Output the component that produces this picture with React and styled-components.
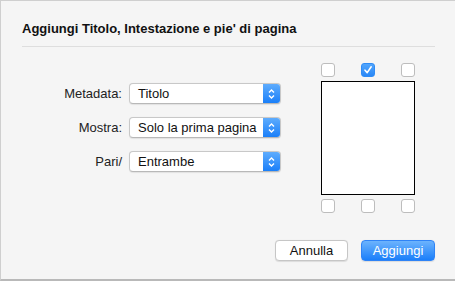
import React from "react";
import styled, { createGlobalStyle } from "styled-components";

const Global = createGlobalStyle`
  html, body { margin: 0; padding: 0; background: #f5f5f5; }
  * { box-sizing: border-box; }
`;

const Window = styled.div`
  width: 455px;
  height: 281px;
  background: #f5f5f5;
  border-top: 1px solid #cfcfcf;
  border-left: 1px solid #cfcfcf;
  border-bottom: 2px solid #b9b9b9;
  font-family: "Liberation Sans", Arial, sans-serif;
  color: #1e1e1e;
  display: flex;
  flex-direction: column;
  padding: 20px 19px 0 21px;
`;

const Title = styled.h1`
  margin: 0;
  font-size: 13px;
  font-weight: bold;
  line-height: 16px;
  color: #111;
`;

const Separator = styled.div`
  height: 1px;
  background: #dedede;
  margin-top: 9px;
  width: 413px;
`;

const Body = styled.div`
  display: flex;
  margin-top: 16px;
`;

const Form = styled.div`
  display: grid;
  grid-template-columns: 100px 152px;
  column-gap: 7px;
  row-gap: 13px;
  align-content: start;
  margin-top: 20px;
`;

const Label = styled.label`
  font-size: 13px;
  text-align: right;
  align-self: center;
  color: #222;
`;

const Popup = styled.div`
  height: 21px;
  display: flex;
  background: #fff;
  border: 1px solid #c8c8c8;
  border-bottom-color: #b8b8b8;
  border-radius: 4px;
  overflow: hidden;
  box-shadow: 0 0.5px 1px rgba(0,0,0,0.08);
`;

const PopupText = styled.span`
  flex: 1;
  font-size: 13px;
  line-height: 19px;
  padding-left: 8px;
  white-space: nowrap;
  overflow: hidden;
  color: #111;
`;

const Stepper = styled.span`
  width: 17px;
  background: linear-gradient(#5eacfd, #1a7ff9);
  display: flex;
  align-items: center;
  justify-content: center;
`;

const Preview = styled.div`
  margin-left: 40px;
  display: flex;
  flex-direction: column;
  gap: 4px;
  width: 94px;
`;

const CheckRow = styled.div`
  display: flex;
  justify-content: space-between;
`;

const Check = styled.span`
  width: 14px;
  height: 14px;
  border-radius: 3px;
  border: 1px solid ${(p) => (p.$on ? "#2f8cf6" : "#bdbdbd")};
  background: ${(p) => (p.$on ? "linear-gradient(#52a6fd, #2a88f7)" : "#fff")};
  display: flex;
  align-items: center;
  justify-content: center;
`;

const Page = styled.div`
  height: 114px;
  background: #fff;
  border: 1px solid #000;
`;

const Footer = styled.div`
  display: flex;
  justify-content: flex-end;
  gap: 13px;
  margin-top: auto;
  margin-bottom: 18px;
  width: 413px;
`;

const Button = styled.button`
  height: 21px;
  width: ${(p) => p.$w}px;
  font-family: inherit;
  font-size: 13px;
  border-radius: 4px;
  padding: 0;
  border: 1px solid ${(p) => (p.$primary ? "#2f83f6" : "#c6c6c6")};
  background: ${(p) => (p.$primary ? "linear-gradient(#6cb3fd, #1b7ffa)" : "#fff")};
  color: ${(p) => (p.$primary ? "#fff" : "#111")};
  box-shadow: 0 0.5px 1px rgba(0,0,0,0.1);
`;

const Arrows = () => (
  <svg width="9" height="12" viewBox="0 0 9 12">
    <path d="M2 4.5 L4.5 2 L7 4.5 M2 7.5 L4.5 10 L7 7.5" stroke="#fff" strokeWidth="1.4" fill="none" />
  </svg>
);

const Tick = () => (
  <svg width="10" height="10" viewBox="0 0 10 10">
    <path d="M2 5.2 L4.2 7.6 L8.2 1.8" stroke="#fff" strokeWidth="1.6" fill="none" strokeLinecap="round" strokeLinejoin="round" />
  </svg>
);

const Select = ({ value }) => (
  <Popup>
    <PopupText>{value}</PopupText>
    <Stepper><Arrows /></Stepper>
  </Popup>
);

export default function App() {
  return (
    <>
      <Global />
      <Window>
        <Title>Aggiungi Titolo, Intestazione e pie' di pagina</Title>
        <Separator />
        <Body>
          <Form>
            <Label>Metadata:</Label>
            <Select value="Titolo" />
            <Label>Mostra:</Label>
            <Select value="Solo la prima pagina" />
            <Label>Pari/</Label>
            <Select value="Entrambe" />
          </Form>
          <Preview>
            <CheckRow>
              <Check />
              <Check $on><Tick /></Check>
              <Check />
            </CheckRow>
            <Page />
            <CheckRow>
              <Check />
              <Check />
              <Check />
            </CheckRow>
          </Preview>
        </Body>
        <Footer>
          <Button $w={73}>Annulla</Button>
          <Button $w={74} $primary>Aggiungi</Button>
        </Footer>
      </Window>
    </>
  );
}
